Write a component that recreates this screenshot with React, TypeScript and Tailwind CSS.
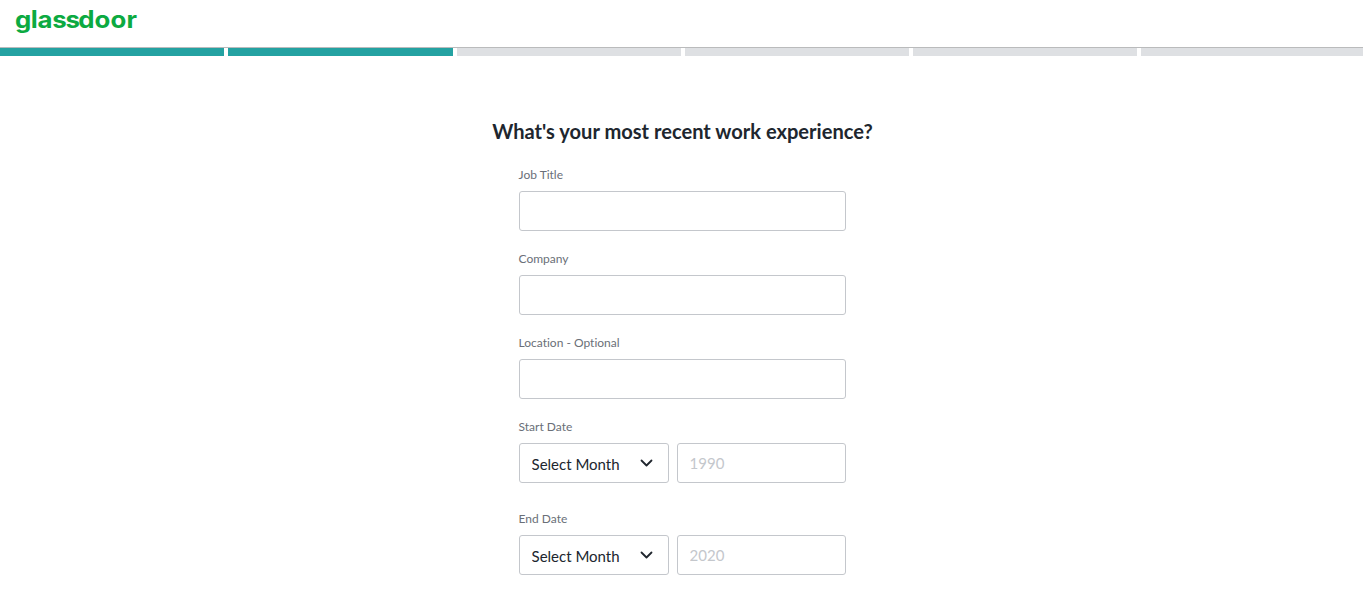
import { useState } from 'react';

const STEPS = [true, true, false, false, false, false];

const MONTHS = [
  'January',
  'February',
  'March',
  'April',
  'May',
  'June',
  'July',
  'August',
  'September',
  'October',
  'November',
  'December',
];

const inputClass =
  'h-10 rounded-[3px] border border-[#c4c7cc] bg-white px-3 text-[15px] text-[#20262e] outline-none placeholder:text-[#c4c7cc] focus:border-[#0caa41]';

function Logo() {
  return (
    <svg width="124" height="30" viewBox="0 0 124 30" role="img" aria-label="glassdoor">
      <text
        x="0 14.7 20.9 34.7 46.9 58.8 74 88.8 103.7"
        y="22.4"
        transform="scale(1.075 1)"
        fill="#0caa41"
        className="font-['Inter',sans-serif] text-[24px] font-bold"
      >
        glassdoor
      </text>
    </svg>
  );
}

function ProgressBar() {
  return (
    <div className="flex gap-1 overflow-hidden border-t border-[#babbbc]">
      {STEPS.map((done, i) => (
        <div
          key={i}
          className={`h-2 w-[224.25px] shrink-0 ${done ? 'bg-[#24a2a2]' : 'bg-[#dee0e3]'}`}
        />
      ))}
    </div>
  );
}

function Label({ htmlFor, text }: { htmlFor: string; text: string }) {
  return (
    <label htmlFor={htmlFor} className="mb-2 block text-xs leading-4 text-[#6a6f78]">
      {text}
    </label>
  );
}

function TextField({ id, label }: { id: string; label: string }) {
  return (
    <div>
      <Label htmlFor={id} text={label} />
      <input id={id} type="text" className={`${inputClass} w-full`} />
    </div>
  );
}

function DateField({ id, label, placeholder }: { id: string; label: string; placeholder: string }) {
  const [month, setMonth] = useState('');

  return (
    <div>
      <Label htmlFor={id} text={label} />
      <div className="flex gap-2">
        <div className="relative w-[150px]">
          <select
            id={id}
            value={month}
            onChange={(e) => setMonth(e.target.value)}
            className={`${inputClass} w-full appearance-none pt-0.5`}
          >
            <option value="">Select Month</option>
            {MONTHS.map((m) => (
              <option key={m} value={m}>
                {m}
              </option>
            ))}
          </select>
          <svg
            className="pointer-events-none absolute top-4 right-4 text-[#20262e]"
            width="13"
            height="8"
            viewBox="0 0 13 8"
            fill="none"
            stroke="currentColor"
            strokeWidth="1.8"
            strokeLinecap="round"
            strokeLinejoin="round"
          >
            <path d="M1.5 1.5l5 5 5-5" />
          </svg>
        </div>
        <input
          type="text"
          aria-label={`${label} year`}
          placeholder={placeholder}
          className={`${inputClass} min-w-0 flex-1`}
        />
      </div>
    </div>
  );
}

export default function App() {
  return (
    <div className="h-screen overflow-hidden bg-white font-['Lato',sans-serif] [font-variant-ligatures:none]">
      <header className="flex h-[47px] items-start pt-1.5 pl-[15px]">
        <Logo />
      </header>
      <ProgressBar />

      <main className="flex flex-col items-center pt-[60px] pl-0.5">
        <h1 className="text-[20.1px] leading-[30px] font-bold text-[#20262e]">
          What's your most recent work experience?
        </h1>
        <form className="mt-[21px] flex w-[327.9px] flex-col gap-5">
          <TextField id="job-title" label="Job Title" />
          <TextField id="company" label="Company" />
          <TextField id="location" label="Location - Optional" />
          <DateField id="start-month" label="Start Date" placeholder="1990" />
          <div className="pt-2">
            <DateField id="end-month" label="End Date" placeholder="2020" />
          </div>
        </form>
      </main>
    </div>
  );
}
